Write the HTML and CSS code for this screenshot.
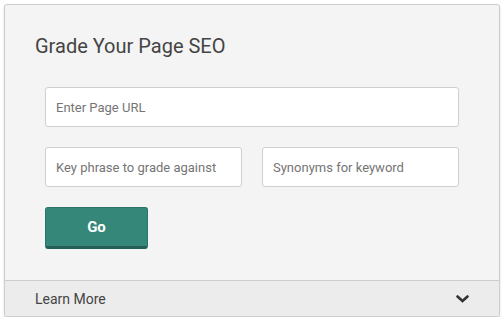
FILE: index.html
```html
<!DOCTYPE html>
<html>
<head>
<meta charset="utf-8">
<link rel="stylesheet" href="styles.css">
</head>
<body>
<div class="card">
  <div class="card-body">
    <h2 class="title">Grade Your Page SEO</h2>
    <form class="form">
      <input class="field" type="text" placeholder="Enter Page URL">
      <div class="row">
        <input class="field" type="text" placeholder="Key phrase to grade against">
        <input class="field" type="text" placeholder="Synonyms for keyword">
      </div>
      <div class="actions"><button class="go" type="button">Go</button></div>
    </form>
  </div>
  <div class="card-footer">
    <span class="learn">Learn More</span>
    <svg class="chev" width="13" height="8" viewBox="0 0 13 8"><path d="M1.5 1.5 L6.5 6 L11.5 1.5" fill="none" stroke="#333" stroke-width="2.6" stroke-linecap="round" stroke-linejoin="miter"/></svg>
  </div>
</div>
</body>
</html>
```

FILE: styles.css
```css
* { box-sizing: border-box; }
html, body { margin: 0; padding: 0; background: #ffffff; }
body { font-family: Roboto, "Noto Sans", Arial, sans-serif; }
.card {
  margin: 4px 0 0 4px;
  width: 496px;
  background: #f4f4f4;
  border: 1px solid #cdcdcd;
  border-radius: 3px;
  box-shadow: 0 1px 2px rgba(0,0,0,0.18);
  overflow: hidden;
}
.card-body { padding: 29px 0 31px 0; }
.title {
  margin: 0 0 29px 30px;
  font-size: 20px;
  line-height: 24px;
  font-weight: 400;
  color: #444;
}
.form { margin: 0 40px; display: flex; flex-direction: column; gap: 20px; }
.row { display: flex; gap: 20px; }
.row .field { flex: 1; min-width: 0; }
.field {
  height: 40px;
  width: 100%;
  border: 1px solid #cfcfcf;
  border-radius: 3px;
  background: #fff;
  padding: 0 10px;
  font-family: Roboto, "Noto Sans", Arial, sans-serif;
  font-size: 13px;
  color: #444;
  outline: none;
}
.field::placeholder { color: #757575; opacity: 1; }
.actions { display: flex; }
.go {
  width: 103px;
  height: 42px;
  background: #358779;
  border: 1px solid #2b7468;
  border-bottom: 3px solid #235f55;
  border-radius: 3px;
  color: #fff;
  font-family: Roboto, "Noto Sans", Arial, sans-serif;
  font-size: 15px;
  font-weight: 700;
  padding: 0;
}
.card-footer {
  height: 36px;
  background: #ececec;
  border-top: 1px solid #cdcdcd;
  display: flex;
  align-items: center;
  justify-content: space-between;
  padding: 0 30px;
}
.learn { font-size: 14px; color: #444; }
.chev { display: block; margin-top: 1px; }
```
